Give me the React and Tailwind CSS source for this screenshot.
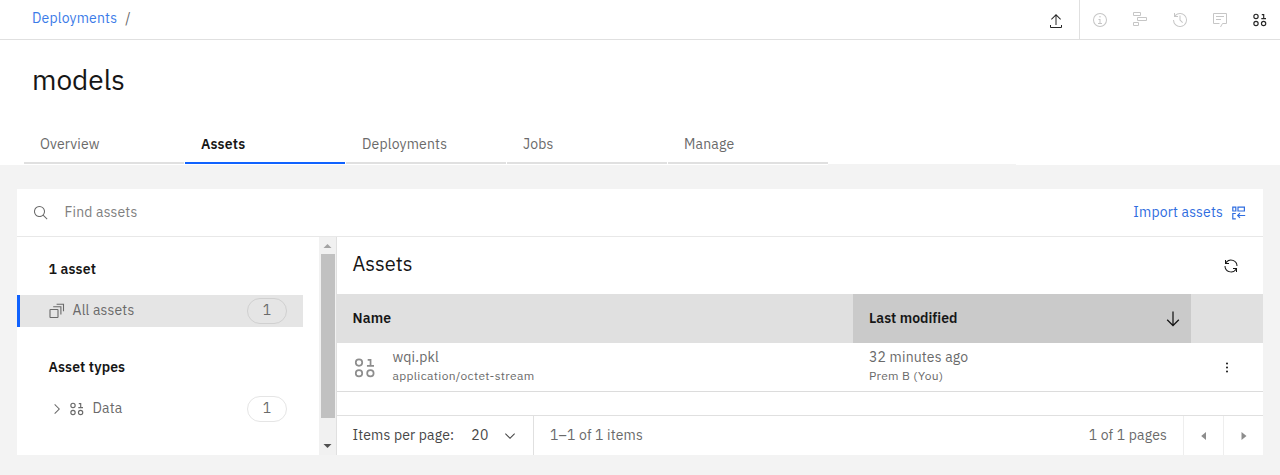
const Icon = ({ d, className, box = '0 0 32 32' }) => (
  <svg viewBox={box} fill="currentColor" className={'shrink-0 ' + className}>
    <path d={d} />
  </svg>
);

const P = {
  upload: 'M26 24v4H6v-4H4v4a2 2 0 0 0 2 2h20a2 2 0 0 0 2-2v-4zM6 12l1.41 1.4L15 5.83V24h2V5.83l7.59 7.57L26 12 16 2z',
  info: 'M17 22v-8h-4v2h2v6h-3v2h8v-2zM16 8a1.5 1.5 0 1 0 1.5 1.5A1.5 1.5 0 0 0 16 8zM16 30a14 14 0 1 1 14-14 14 14 0 0 1-14 14zm0-26a12 12 0 1 0 12 12A12 12 0 0 0 16 4z',
  history: 'M20.59 22 15 16.41V7h2v8.58l5 5.01zM16 2A13.94 13.94 0 0 0 6 6.23V2H4v8h8V8H7.08A12 12 0 1 1 4 16H2A14 14 0 1 0 16 2z',
  search: 'm29 27.59-7.55-7.56a11.02 11.02 0 1 0-1.42 1.42L27.59 29zM4 13a9 9 0 1 1 9 9 9 9 0 0 1-9-9z',
  renew: 'M12 10H6.78A11 11 0 0 1 27 16h2A13 13 0 0 0 6 7.68V4H4v8h8zM20 22h5.22A11 11 0 0 1 5 16H3a13 13 0 0 0 23 8.32V28h2v-8h-8z',
  down: 'M24.59 16.59 17 24.17V4h-2v20.17l-7.59-7.58L6 18l10 10 10-10z',
  chevDown: 'M16 22 6 12l1.4-1.4 8.6 8.6 8.6-8.6L26 12z',
  chevRight: 'M22 16 12 26l-1.4-1.4 8.6-8.6-8.6-8.6L12 6z',
};

const Binary = ({ className }) => (
  <svg viewBox="0 0 16 16" fill="none" stroke="currentColor" strokeWidth="1.15" className={'shrink-0 ' + className}>
    <circle cx="4" cy="4.400" r="2.150" />
    <circle cx="4" cy="11.500" r="2.150" />
    <circle cx="11.600" cy="11.500" r="2.150" />
    <path d="M9.800 2.600h1.900v4M9.300 6.600h4.700" />
  </svg>
);

const Flow = ({ className }) => (
  <svg viewBox="0 0 16 16" fill="none" stroke="currentColor" className={'shrink-0 ' + className}>
    <path d="M1.5 .5h7v3h-7zM5.500 5.500h9v3h-9zM1.500 10.500h5v3h-5z" />
  </svg>
);

const Chat = ({ className }) => (
  <svg viewBox="0 0 16 16" fill="none" stroke="currentColor" className={'shrink-0 ' + className}>
    <path d="M7.500 11.500h-6v-10h13v10h-4l-2 3.500M4 4.500h8M4 7.500h5" />
  </svg>
);

const Stack = ({ className }) => (
  <svg viewBox="0 0 16 16" fill="none" stroke="currentColor" strokeWidth="1.1" className={'shrink-0 ' + className}>
    <rect x="1" y="6.500" width="8" height="8" rx="0.600" />
    <path d="M4.200 3.800h7.700v7.700M7.600 1.300h6.900v6.900" />
  </svg>
);

const ImportIcon = ({ className }) => (
  <svg viewBox="0 0 16 16" fill="none" stroke="currentColor" strokeWidth="1.2" className={'shrink-0 ' + className}>
    <path d="M1.800 2.200h3v3.800h-3zM7 2.200h6.400v3.800H7zM4.800 8.500h-3v5.400h3M14.200 10.500H6.800M9 8.200l-2.300 2.300L9 12.800" />
  </svg>
);

const tabs = ['Overview', 'Assets', 'Deployments', 'Jobs', 'Manage'];

const Count = ({ className }) => (
  <span className={'flex h-[26px] w-10 items-center justify-center rounded-full border pb-0.5 ' + className}>1</span>
);

export default function App() {
  return (
    <div className="flex h-[475px] w-[1280px] flex-col overflow-hidden bg-[#f3f3f3] font-['IBM_Plex_Sans',Roboto,sans-serif] text-sm leading-[18px] tracking-[0.16px] text-[#6a6a6a]">
      <header className="flex h-10 shrink-0 border-b border-[#e0e0e0] bg-white">
        <nav className="flex flex-1 gap-2 pl-8 pt-[9px]">
          <a className="text-[#3b7be8]">Deployments</a>
          <span>/</span>
        </nav>
        <div className="flex w-12 justify-center border-r border-[#e0e0e0] pt-[13px] text-[#262626]">
          <Icon d={P.upload} className="size-4" />
        </div>
        <div className="flex w-[200px] items-center justify-around text-[#c6c6c6]">
          <Icon d={P.info} className="size-4" />
          <Flow className="size-4" />
          <Icon d={P.history} className="size-4" />
          <Chat className="size-4" />
          <Binary className="size-4 text-[#262626]" />
        </div>
      </header>

      <div className="flex h-[125px] shrink-0 flex-col bg-white">
        <h1 className="h-[84px] pl-8 pt-[22px] text-[28px] leading-9 tracking-normal text-[#161616]">models</h1>
        <div className="flex gap-px pl-6">
          {tabs.map((t, i) => (
            <div
              key={t}
              className={
                'h-10 w-40 border-b-2 pl-4 pt-[11px]' +
                (i === 1 ? ' border-[#1062fe] font-semibold text-[#161616]' : ' border-[#e0e0e0]')
              }
            >
              {t}
            </div>
          ))}
          <div className="-ml-px h-[41px] w-[188px] border-b border-[#f3f3f3]" />
        </div>
      </div>

      <main className="ml-[17px] mt-6 flex h-[266px] w-[1246px] shrink-0 flex-col bg-white">
        <div className="flex h-12 shrink-0 items-center border-b border-[#e8e8e8] px-4">
          <Icon d={P.search} className="size-4" />
          <span className="ml-[15.5px] flex-1 pb-px text-[#808080]">Find assets</span>
          <span className="pb-px text-[#2f6de0]">Import assets</span>
          <ImportIcon className="ml-2 size-4 text-[#2f6de0]" />
        </div>

        <div className="flex min-h-0 flex-1">
          <aside className="w-[302px] pr-4">
            <h2 className="h-[58px] pl-[31.5px] pt-[23px] font-semibold text-[#161616]">1 asset</h2>
            <div className="flex h-8 items-center border-l-[3px] border-[#1062fe] bg-[#e5e5e5] pl-[29px] pr-4">
              <Stack className="size-4" />
              <span className="ml-[7.5px] flex-1 pb-0.5">All assets</span>
              <Count className="border-[#d0d0d0]" />
            </div>
            <h2 className="h-[66px] pl-[31.5px] pt-[31px] font-semibold tracking-[0.12px] text-[#161616]">Asset types</h2>
            <div className="flex h-8 items-center pl-8 pr-4">
              <Icon d={P.chevRight} className="size-4" />
              <Binary className="ml-1 size-4" />
              <span className="ml-[7.5px] flex-1 pb-0.5">Data</span>
              <Count className="border-[#e5e5e5]" />
            </div>
          </aside>

          <div className="flex w-[17px] flex-col items-center bg-[#f1f1f1]">
            <svg viewBox="0 0 17 17" className="h-[17px] w-[17px] shrink-0 fill-[#a3a3a3]"><path d="M4.500 11h8L8.500 7z" /></svg>
            <div className="h-[164px] w-[14px] bg-[#c1c1c1]" />
            <svg viewBox="0 0 17 17" className="mt-[19px] h-[17px] w-[17px] shrink-0 fill-[#505050]"><path d="M4.500 7h8l-4 4z" /></svg>
          </div>

          <section className="flex flex-1 flex-col border-l border-[#e0e0e0]">
            <div className="flex h-[57px] shrink-0 items-center justify-between pl-[15.5px] pr-6 text-[#161616]">
              <h2 className="pb-[3px] text-xl leading-6 tracking-normal">Assets</h2>
              <Icon d={P.renew} className="size-4" />
            </div>
            <div className="flex h-[49px] shrink-0 bg-[#e0e0e0] font-semibold text-[#161616]">
              <div className="w-[516px] pl-[15.5px] pt-[15px]">Name</div>
              <div className="flex w-[338px] justify-between bg-[#cacaca] pl-4 pr-2 pt-[15px] tracking-[0.02px]">
                Last modified
                <Icon d={P.down} className="size-5" />
              </div>
            </div>
            <div className="flex h-[49px] shrink-0 border-b border-[#dcdcdc]">
              <div className="flex w-[516px] pl-[15.5px]">
                <Binary className="mt-[13px] size-6 text-[#8d8d8d]" />
                <div className="ml-4 pt-[5px]">
                  <div>wqi.pkl</div>
                  <div className="text-xs leading-5 tracking-[0.32px]">application/octet-stream</div>
                </div>
              </div>
              <div className="w-[338px] pl-4 pt-[5px]">
                <div>32 minutes ago</div>
                <div className="text-xs leading-5 tracking-[0.32px]">Prem B (You)</div>
              </div>
              <div className="flex flex-1 items-center justify-center">
                <svg viewBox="0 0 16 16" className="size-4 fill-[#161616]"><circle cx="8" cy="4.500" r="1" /><circle cx="8" cy="8.500" r="1" /><circle cx="8" cy="12.500" r="1" /></svg>
              </div>
            </div>
            <div className="h-[23px] shrink-0" />
            <footer className="flex h-10 border-t border-[#e0e0e0]">
              <div className="flex w-[197px] items-center border-r border-[#e0e0e0] pl-[15.5px] text-[#464646]">
                <span className="pb-px">Items per page:</span>
                <span className="ml-[17px] pb-px">20</span>
                <Icon d={P.chevDown} className="ml-[13.5px] size-4" />
              </div>
              <div className="flex flex-1 items-center pb-px pl-4">1–1 of 1 items</div>
              <div className="flex items-center pb-px pr-4">1 of 1 pages</div>
              <div className="flex w-10 items-center justify-center border-l border-[#eeeeee]">
                <svg viewBox="0 0 16 16" className="size-4 fill-[#8d8d8d]"><path d="M10 4v8L5.200 8z" /></svg>
              </div>
              <div className="flex w-10 items-center justify-center border-l border-[#eeeeee]">
                <svg viewBox="0 0 16 16" className="size-4 fill-[#8d8d8d]"><path d="M5.500 4v8l5-4z" /></svg>
              </div>
            </footer>
          </section>
        </div>
      </main>
    </div>
  );
}
